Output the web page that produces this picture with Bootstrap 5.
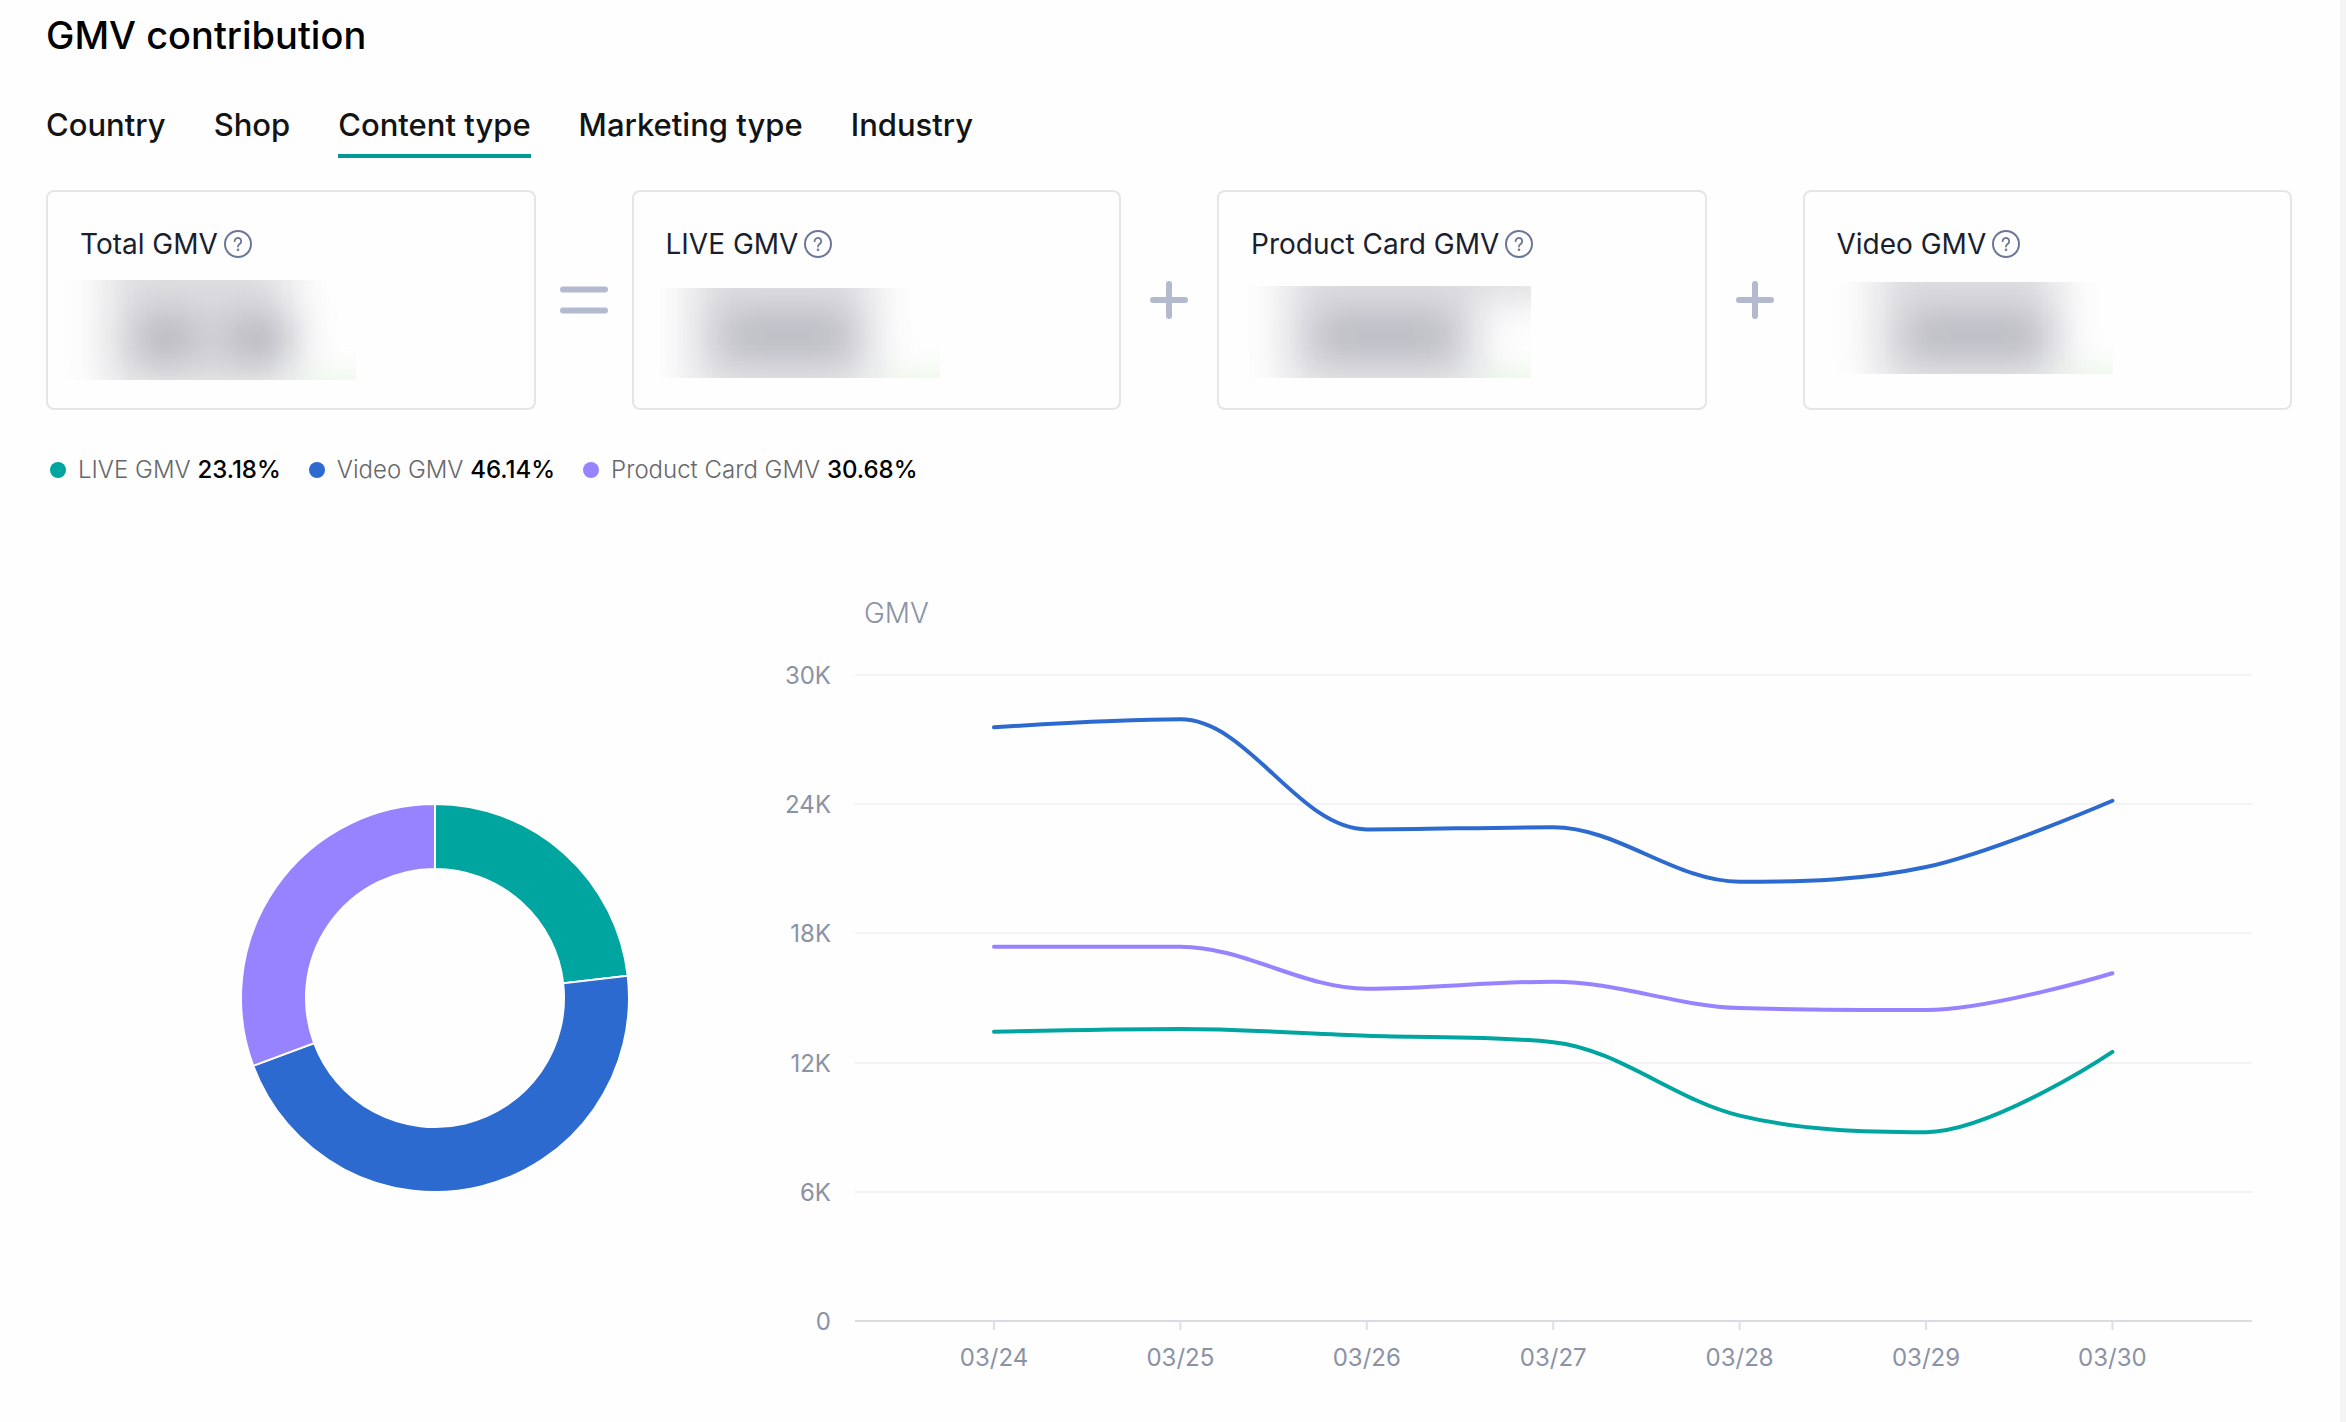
<!DOCTYPE html>
<html lang="en">
<head>
<meta charset="utf-8">
<meta name="viewport" content="width=device-width, initial-scale=1">
<title>GMV contribution</title>
<link href="https://cdn.jsdelivr.net/npm/bootstrap@5.3.0/dist/css/bootstrap.min.css" rel="stylesheet">
<style>
  :root { --axis: #8b92a5; }
  body { font-family: Inter, Roboto, "Liberation Sans", sans-serif; background: #fefefe; color: #000; min-height: 100vh; border-right: 6px solid #f4f4f4; }
  .page { padding: 10px 48px 0 46px; }
  .page-title { font-size: 38px; line-height: 50px; font-weight: 500; margin: 0 0 40px; }
  .gmv-tabs { gap: 48px; margin-bottom: 32px; }
  .gmv-tabs .nav-link { padding: 0 0 4px; font-size: 31px; line-height: 50px; font-weight: 500; color: #121415; border-bottom: 4px solid transparent; }
  .gmv-tabs .nav-link.active { border-bottom-color: #009995; }
  .metric { flex: 1 1 0; height: 220px; border: 2px solid #e4e5e7; border-radius: 8px; background: #fefefe; }
  .metric-head { gap: 6px; padding: 34px 32px 0; font-size: 28px; line-height: 36px; font-weight: 400; color: #1a1f30; }
  .metric-head .btn { line-height: 0; }
  .operator { width: 96px; color: #b3b9cf; }
  .masked { position: relative; overflow: hidden; width: 282px; height: 92px; margin: 20px 0 0 26px; }
  .masked-total { width: 300px; height: 100px; margin: 18px 0 0 8px; }
  .masked-live { width: 280px; height: 90px; margin-top: 26px; }
  .masked-product { margin: 24px 0 0 30px; }
  .masked::before { content: ""; position: absolute; inset: -40px; filter: blur(22px);
    background:
      linear-gradient(#adaeb7, #adaeb7) 100px 70px / 136px 34px no-repeat,
      linear-gradient(#dcdce0, #dcdce0) 72px 0 / 180px 150px no-repeat,
      linear-gradient(#def2d8, #def2d8) 262px 136px / 140px 70px no-repeat; }
  .masked-total::before { background:
      linear-gradient(#a6a7b0, #a6a7b0) 122px 80px / 58px 36px no-repeat,
      linear-gradient(#a6a7b0, #a6a7b0) 212px 80px / 64px 36px no-repeat,
      linear-gradient(#dddde0, #dddde0) 92px 0 / 180px 156px no-repeat,
      linear-gradient(#def2d8, #def2d8) 282px 146px / 140px 70px no-repeat; }
  .masked-video::before { background:
      linear-gradient(#adaeb7, #adaeb7) 114px 76px / 146px 34px no-repeat,
      linear-gradient(#dcdce0, #dcdce0) 86px 0 / 180px 150px no-repeat,
      linear-gradient(#def2d8, #def2d8) 268px 138px / 140px 70px no-repeat; }
  .masked-product::before { background:
      linear-gradient(#adaeb7, #adaeb7) 104px 72px / 146px 34px no-repeat,
      linear-gradient(#dcdce0, #dcdce0) 78px 0 / 190px 150px no-repeat,
      linear-gradient(#d8d8dc, #d8d8dc) 230px 0 / 150px 50px no-repeat,
      linear-gradient(#def2d8, #def2d8) 268px 136px / 140px 70px no-repeat; }
  .legend-row { gap: 28px; margin: 42px 0 0 4px; font-size: 24px; line-height: 36px; font-weight: 300; color: #66676a; }
  .legend-row li { gap: 12px; }
  .legend-row b { font-weight: 500; color: #000; }
  .dot { width: 16px; height: 16px; border-radius: 50%; }
  .charts { display: grid; grid-template-columns: 734fr 1512fr; margin-top: 98px; }
  .charts svg { display: block; width: 100%; height: auto; }
  .axis-text { font-size: 24px; font-weight: 400; fill: var(--axis); }
  .axis-name { font-size: 28px; font-weight: 300; fill: var(--axis); }
  .series { fill: none; stroke-width: 4; stroke-linecap: round; stroke-linejoin: round; }
</style>
</head>
<body>
<svg class="d-none" aria-hidden="true">
  <symbol id="help" viewBox="0 0 28 28">
    <circle cx="14" cy="14" r="13" fill="none" stroke="#6c7698" stroke-width="2"/>
    <path d="M10.600 11.200a3.300 3.300 0 1 1 5.400 2.500c-1.300 1-2 1.500-2 2.800" fill="none" stroke="#6c7698" stroke-width="1.800" stroke-linecap="round"/>
    <circle cx="14" cy="19.800" r="1.300" fill="#6c7698"/>
  </symbol>
  <symbol id="plus" viewBox="0 0 38 38"><path d="M3 19h32M19 3v32" stroke="currentColor" stroke-width="6" stroke-linecap="round"/></symbol>
  <symbol id="equals" viewBox="0 0 48 38"><path d="M3 8.500h42M3 29.500h42" stroke="currentColor" stroke-width="6" stroke-linecap="round"/></symbol>
</svg>
<main class="page">
  <h1 class="page-title">GMV contribution</h1>
  <nav class="nav gmv-tabs" aria-label="Breakdown">
    <a class="nav-link" href="#">Country</a>
    <a class="nav-link" href="#">Shop</a>
    <a class="nav-link active" aria-current="page" href="#">Content type</a>
    <a class="nav-link" href="#">Marketing type</a>
    <a class="nav-link" href="#">Industry</a>
  </nav>

  <section class="d-flex">
    <div class="metric">
      <div class="metric-head d-flex align-items-center">Total GMV
        <button class="btn p-0 border-0" type="button" aria-label="About Total GMV"><svg width="28" height="28"><use href="#help"/></svg></button></div>
      <div class="masked masked-total"></div>
    </div>
    <div class="operator d-flex align-items-center justify-content-center"><svg width="48" height="38"><use href="#equals"/></svg></div>
    <div class="metric">
      <div class="metric-head d-flex align-items-center">LIVE GMV
        <button class="btn p-0 border-0" type="button" aria-label="About LIVE GMV"><svg width="28" height="28"><use href="#help"/></svg></button></div>
      <div class="masked masked-live"></div>
    </div>
    <div class="operator d-flex align-items-center justify-content-center"><svg width="38" height="38"><use href="#plus"/></svg></div>
    <div class="metric">
      <div class="metric-head d-flex align-items-center">Product Card GMV
        <button class="btn p-0 border-0" type="button" aria-label="About Product Card GMV"><svg width="28" height="28"><use href="#help"/></svg></button></div>
      <div class="masked masked-product"></div>
    </div>
    <div class="operator d-flex align-items-center justify-content-center"><svg width="38" height="38"><use href="#plus"/></svg></div>
    <div class="metric">
      <div class="metric-head d-flex align-items-center">Video GMV
        <button class="btn p-0 border-0" type="button" aria-label="About Video GMV"><svg width="28" height="28"><use href="#help"/></svg></button></div>
      <div class="masked masked-video"></div>
    </div>
  </section>

  <ul class="legend-row list-unstyled d-flex flex-wrap">
    <li class="d-flex align-items-center"><span class="dot" style="background:#00a5a0"></span><span>LIVE GMV <b>23.18%</b></span></li>
    <li class="d-flex align-items-center"><span class="dot" style="background:#2d6ad0"></span><span>Video GMV <b>46.14%</b></span></li>
    <li class="d-flex align-items-center"><span class="dot" style="background:#9783ff"></span><span>Product Card GMV <b>30.68%</b></span></li>
  </ul>

  <section class="charts">
    <svg viewBox="0 0 734 786" role="img" aria-label="GMV share by content type"><g id="donut"></g></svg>
    <svg viewBox="0 0 1512 786" role="img" aria-label="GMV by day"><text class="axis-name" x="84" y="37">GMV</text><g id="plot"></g></svg>
  </section>
</main>
<script src="https://cdn.jsdelivr.net/npm/bootstrap@5.3.0/dist/js/bootstrap.bundle.min.js"></script>
<script>
const NS = 'http://www.w3.org/2000/svg';
function add(parent, tag, attrs, text) {
  const el = document.createElementNS(NS, tag);
  for (const k in attrs) el.setAttribute(k, attrs[k]);
  if (text) el.textContent = text;
  parent.appendChild(el);
}

// Donut: share of each content type, clockwise from the top
const donut = document.getElementById('donut');
const cx = 389, cy = 412, R = 194, r = 129;
const at = (rad, f) => [cx + rad * Math.sin(2 * Math.PI * f), cy - rad * Math.cos(2 * Math.PI * f)].map(v => v.toFixed(2)).join(' ');
let from = 0;
for (const [share, color] of [[.2318, '#00a5a0'], [.4614, '#2d6ad0'], [.3068, '#9783ff']]) {
  const to = from + share;
  add(donut, 'path', { d: `M${at(R, from)}A${R} ${R} 0 0 1 ${at(R, to)}L${at(r, to)}A${r} ${r} 0 0 0 ${at(r, from)}Z`, fill: color, stroke: '#fff', 'stroke-width': 2 });
  from = to;
}

// Axes
const plot = document.getElementById('plot');
const top0 = 89, base = 735, left = 75, right = 1472;
['30K', '24K', '18K', '12K', '6K', '0'].forEach((t, i) => {
  const y = Math.round(top0 + i * (base - top0) / 5);
  add(plot, 'line', { x1: left, x2: right, y1: y, y2: y, stroke: t === '0' ? '#d9dce4' : '#f2f3f8', 'stroke-width': 2 });
  add(plot, 'text', { class: 'axis-text', x: 51, y: y + 9, 'text-anchor': 'end' }, t);
});
const days = ['03/24', '03/25', '03/26', '03/27', '03/28', '03/29', '03/30'];
const xs = days.map((_, i) => 214 + i * 186.4);
days.forEach((d, i) => {
  add(plot, 'line', { x1: xs[i], x2: xs[i], y1: base, y2: base + 9, stroke: '#dddfe4', 'stroke-width': 2 });
  add(plot, 'text', { class: 'axis-text', x: xs[i], y: 780, 'text-anchor': 'middle' }, d);
});

// Smooth line: control points are kept between neighbouring values
const clamp = (v, a, b) => Math.max(Math.min(a, b), Math.min(Math.max(a, b), v));
function smooth(p, s) {
  let d = `M${p[0]}`, out = p[0];
  for (let i = 1; i < p.length; i++) {
    const c = p[i], prev = p[i - 1], next = p[i + 1];
    let cin = c, cout = c;
    if (next) {
      const lp = Math.hypot(c[0] - prev[0], c[1] - prev[1]), ln = Math.hypot(next[0] - c[0], next[1] - c[1]);
      const k = ln / (ln + lp), v = [0, 1].map(j => next[j] - prev[j]);
      cout = c.map((q, j) => clamp(q + v[j] * s * k, next[j], q));
      cin = c.map((q, j) => clamp(q - (cout[j] - q) * lp / ln, prev[j], q));
      cout = c.map((q, j) => q + (q - cin[j]) * ln / lp);
    }
    d += `C${out} ${cin} ${c}`;
    out = cout;
  }
  return d;
}
const series = [
  ['#00a5a0', [13.43, 13.56, 13.25, 12.95, 9.54, 8.77, 12.5]],
  ['#2d6ad0', [27.57, 27.94, 22.83, 22.93, 20.4, 21.08, 24.16]],
  ['#9783ff', [17.38, 17.38, 15.43, 15.76, 14.53, 14.44, 16.15]]
];
for (const [color, values] of series) {
  const pts = values.map((v, i) => [xs[i], base - v * (base - top0) / 30]);
  add(plot, 'path', { class: 'series', d: smooth(pts, 0.34), stroke: color });
}
</script>
</body>
</html>
